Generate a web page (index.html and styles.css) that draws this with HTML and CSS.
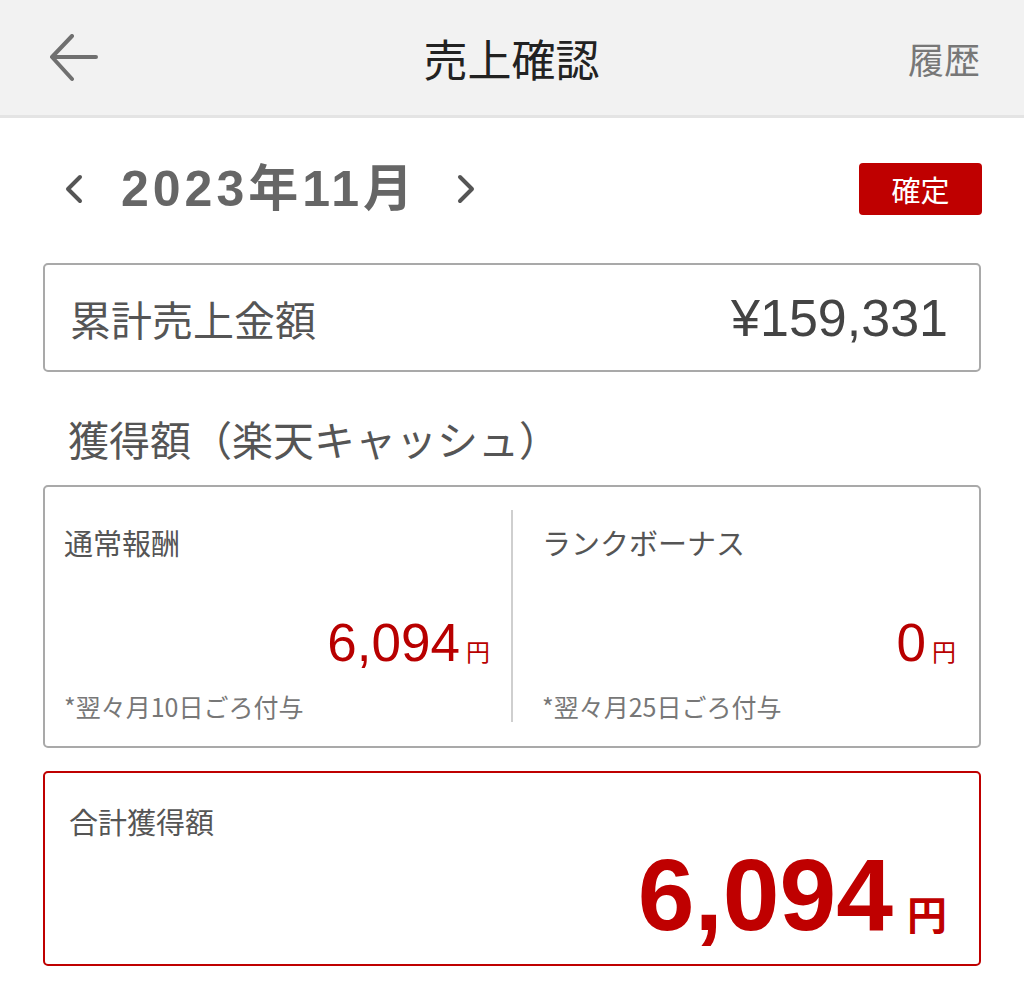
FILE: index.html
```html
<!DOCTYPE html>
<html lang="ja">
<head>
<meta charset="utf-8">
<title>売上確認</title>
<link rel="stylesheet" href="styles.css">
</head>
<body>
<header class="appbar">
  <div class="appbar-left">
    <svg class="back" width="50" height="50" viewBox="0 0 50 50" aria-hidden="true">
      <path d="M47 23H4M23 2L3 23L23 45" fill="none" stroke="#707070" stroke-width="4" stroke-linecap="round" stroke-linejoin="round"/>
    </svg>
  </div>
  <h1 class="title">売上確認</h1>
  <div class="appbar-right"><span class="history">履歴</span></div>
</header>

<main class="content">
  <div class="month-row">
    <div class="month-nav">
      <svg class="chev" width="22" height="30" viewBox="0 0 22 30" aria-hidden="true">
        <path d="M17 3L5 15L17 27" fill="none" stroke="#555" stroke-width="4" stroke-linecap="round" stroke-linejoin="round"/>
      </svg>
      <span class="month">2023年11月</span>
      <svg class="chev" width="22" height="30" viewBox="0 0 22 30" aria-hidden="true">
        <path d="M5 3L17 15L5 27" fill="none" stroke="#555" stroke-width="4" stroke-linecap="round" stroke-linejoin="round"/>
      </svg>
    </div>
    <span class="badge">確定</span>
  </div>

  <section class="card total-sales">
    <span class="ts-label">累計売上金額</span>
    <span class="ts-value">¥159,331</span>
  </section>

  <h2 class="section-title">獲得額（楽天キャッシュ）</h2>

  <section class="card rewards">
    <div class="reward-col left">
      <div class="reward-label">通常報酬</div>
      <div class="reward-amount"><span class="num">6,094</span><span class="yen">円</span></div>
      <div class="reward-note">*翌々月10日ごろ付与</div>
    </div>
    <div class="divider"></div>
    <div class="reward-col right">
      <div class="reward-label">ランクボーナス</div>
      <div class="reward-amount"><span class="num">0</span><span class="yen">円</span></div>
      <div class="reward-note">*翌々月25日ごろ付与</div>
    </div>
  </section>

  <section class="card grand">
    <div class="grand-label">合計獲得額</div>
    <div class="grand-amount"><span class="gnum">6,094</span><span class="gyen">円</span></div>
  </section>
</main>
</body>
</html>
```

FILE: styles.css
```css
* { box-sizing: border-box; }
html, body { margin: 0; padding: 0; }
body {
  width: 1024px;
  background: #ffffff;
  font-family: "Noto Sans CJK JP", "Noto Sans", sans-serif;
  color: #555;
}

.appbar {
  height: 118px;
  background: #f2f2f2;
  border-bottom: 3px solid #e4e4e4;
  display: grid;
  grid-template-columns: 1fr auto 1fr;
  align-items: center;
  padding: 0 44px 0 49px;
}
.appbar-left { display: flex; align-items: center; }
.back { display: block; margin-top: 2px; }
.title {
  margin: 0;
  font-size: 44px;
  font-weight: 400;
  line-height: 56px;
  color: #222;
  transform: translateX(-3px);
}
.appbar-right { display: flex; justify-content: flex-end; }
.history {
  font-size: 36px;
  line-height: 48px;
  color: #777;
}

.content { padding: 0 43px; }

.month-row {
  margin-top: 45px;
  height: 52px;
  display: flex;
  align-items: center;
  justify-content: space-between;
}
.month-nav {
  display: flex;
  align-items: center;
  padding-left: 20px;
}
.chev { display: block; }
.month {
  font-family: "Liberation Sans", "Noto Sans CJK JP", sans-serif;
  font-weight: 700;
  font-size: 50px;
  line-height: 52px;
  letter-spacing: 4px;
  color: #666;
  margin: 0 38px 0 36px;
}
.badge {
  width: 123px;
  height: 52px;
  background: #bf0000;
  color: #fff;
  border-radius: 4px;
  font-size: 29px;
  line-height: 52px;
  text-align: center;
  margin-right: -1px;
}

.card {
  border: 2px solid #a9a9a9;
  border-radius: 5px;
  background: #fff;
}

.total-sales {
  margin-top: 48px;
  height: 109px;
  display: flex;
  align-items: center;
  justify-content: space-between;
  padding: 0 31px 0 25px;
}
.ts-label {
  font-size: 41px;
  line-height: 52px;
  color: #555;
}
.ts-value {
  font-family: "Liberation Sans", sans-serif;
  font-size: 52px;
  line-height: 56px;
  color: #444;
}

.section-title {
  margin: 42px 0 0 0;
  padding-left: 25px;
  font-size: 41px;
  font-weight: 400;
  line-height: 48px;
  color: #555;
}

.rewards {
  margin-top: 23px;
  height: 263px;
  display: grid;
  grid-template-columns: 1fr 2px 1fr;
  padding: 23px 0 24px;
}
.reward-col {
  display: flex;
  flex-direction: column;
  padding-top: 12px;
}
.reward-col.left { padding-left: 19px; padding-right: 21px; }
.reward-col.right { padding-left: 29px; padding-right: 23px; }
.divider {
  width: 2px;
  background: #cfcfcf;
}
.reward-label {
  font-size: 29px;
  line-height: 40px;
  color: #555;
}
.reward-amount {
  margin-top: 55px;
  height: 52px;
  display: flex;
  justify-content: flex-end;
  align-items: baseline;
}
.num {
  font-family: "Liberation Sans", sans-serif;
  font-size: 53px;
  line-height: 52px;
  color: #b80000;
}
.yen {
  font-size: 24px;
  line-height: 24px;
  margin-left: 6px;
  color: #b80000;
}
.reward-note {
  margin-top: 21px;
  font-size: 25px;
  line-height: 32px;
  color: #777;
}

.grand {
  margin-top: 23px;
  height: 195px;
  border-color: #bf0000;
  padding: 28px 32px 0 24px;
}
.grand-label {
  font-size: 29px;
  line-height: 40px;
  color: #555;
}
.grand-amount {
  margin-top: 4px;
  height: 100px;
  display: flex;
  justify-content: flex-end;
  align-items: baseline;
}
.gnum {
  font-family: "Liberation Sans", sans-serif;
  font-weight: 700;
  font-size: 102px;
  line-height: 100px;
  color: #bf0000;
}
.gyen {
  font-size: 40px;
  line-height: 40px;
  font-weight: 700;
  margin-left: 14px;
  color: #bf0000;
}
```
